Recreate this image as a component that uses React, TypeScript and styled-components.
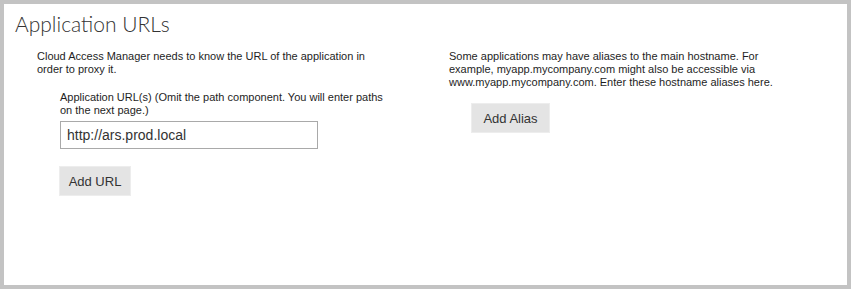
import React from 'react';
import styled, { createGlobalStyle } from 'styled-components';

const GlobalStyle = createGlobalStyle`
  html, body {
    margin: 0;
    padding: 0;
    background: #ffffff;
  }
  * {
    box-sizing: border-box;
  }
`;

const Frame = styled.div`
  width: 851px;
  height: 289px;
  border: 4px solid #c3c3c3;
  background: #ffffff;
  font-family: 'Liberation Sans', Arial, sans-serif;
  color: #1e1e1e;
`;

const Title = styled.h1`
  margin: 0;
  padding: 7px 0 0 11px;
  font-family: 'Lato', 'Open Sans', sans-serif;
  font-weight: 300;
  font-size: 21px;
  line-height: 26px;
  color: #333333;
`;

const Columns = styled.div`
  display: grid;
  grid-template-columns: 412px 1fr;
  padding: 13px 0 0 33px;
`;

const Column = styled.div`
  display: flex;
  flex-direction: column;
  align-items: flex-start;
`;

const Text = styled.p`
  margin: 0;
  width: 330px;
  font-size: 11px;
  line-height: 13px;
`;

const Field = styled.div`
  display: flex;
  flex-direction: column;
  align-items: flex-start;
  gap: 4px;
  margin: 15px 0 0 23px;
`;

const Input = styled.input`
  width: 258px;
  height: 28px;
  border: 1px solid #a9a9a9;
  padding: 0 0 0 6px;
  font-family: 'Liberation Sans', Arial, sans-serif;
  font-size: 14px;
  color: #333333;
  outline: none;
`;

const Button = styled.button<{ $top: number; $left: number; $width: number }>`
  margin: ${p => p.$top}px 0 0 ${p => p.$left}px;
  width: ${p => p.$width}px;
  height: 30px;
  background: #e4e4e4;
  border: 1px solid #ededed;
  font-family: 'Liberation Sans', Arial, sans-serif;
  font-size: 13px;
  color: #333333;
  padding: 0;
  cursor: pointer;
`;

const App: React.FC = () => {
  return (
    <>
      <GlobalStyle />
      <Frame>
        <Title>Application URLs</Title>
        <Columns>
          <Column>
            <Text>
              Cloud Access Manager needs to know the URL of the application in order to proxy it.
            </Text>
            <Field>
              <Text>
                Application URL(s) (Omit the path component. You will enter paths on the next page.)
              </Text>
              <Input type="text" defaultValue="http://ars.prod.local" />
            </Field>
            <Button $top={17} $left={22} $width={72}>Add URL</Button>
          </Column>
          <Column>
            <Text>
              Some applications may have aliases to the main hostname. For example,
              myapp.mycompany.com might also be accessible via www.myapp.mycompany.com.
              Enter these hostname aliases here.
            </Text>
            <Button $top={14} $left={22} $width={79}>Add Alias</Button>
          </Column>
        </Columns>
      </Frame>
    </>
  );
};

export default App;
